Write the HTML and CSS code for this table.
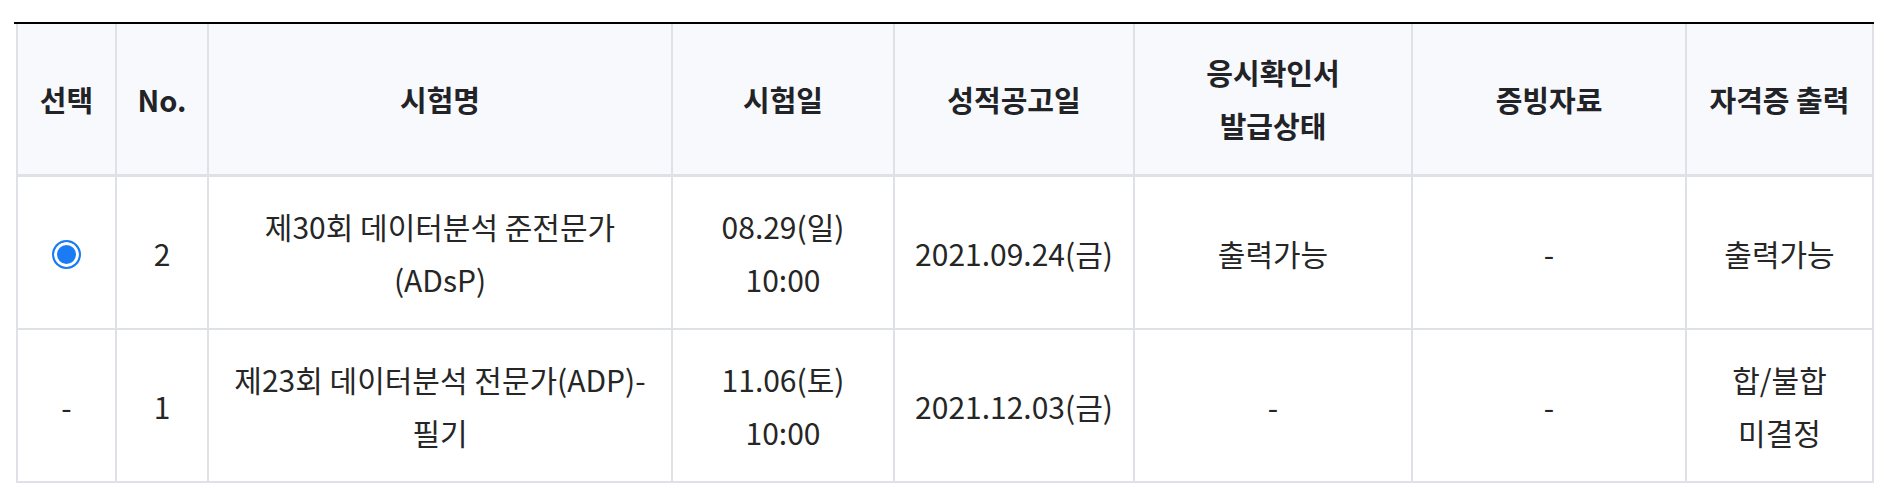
FILE: index.html
```html
<!DOCTYPE html>
<html lang="ko">
<head>
<meta charset="utf-8">
<title>시험 목록</title>
<link rel="stylesheet" href="styles.css">
</head>
<body>
<div class="table-wrap">
  <table class="exam-table">
    <colgroup>
      <col class="c-select">
      <col class="c-no">
      <col class="c-name">
      <col class="c-date">
      <col class="c-result">
      <col class="c-confirm">
      <col class="c-proof">
      <col class="c-cert">
    </colgroup>
    <thead>
      <tr>
        <th>선택</th>
        <th>No.</th>
        <th>시험명</th>
        <th>시험일</th>
        <th>성적공고일</th>
        <th>응시확인서<br>발급상태</th>
        <th>증빙자료</th>
        <th>자격증 출력</th>
      </tr>
    </thead>
    <tbody>
      <tr>
        <td><span class="radio is-checked" role="radio" aria-checked="true"></span></td>
        <td>2</td>
        <td>제30회 데이터분석 준전문가 (ADsP)</td>
        <td>08.29(일)<br>10:00</td>
        <td>2021.09.24(금)</td>
        <td>출력가능</td>
        <td>-</td>
        <td>출력가능</td>
      </tr>
      <tr>
        <td>-</td>
        <td>1</td>
        <td>제23회 데이터분석 전문가(ADP)-필기</td>
        <td>11.06(토)<br>10:00</td>
        <td>2021.12.03(금)</td>
        <td>-</td>
        <td>-</td>
        <td>합/불합<br>미결정</td>
      </tr>
    </tbody>
  </table>
</div>
</body>
</html>
```
FILE: styles.css
```css
html, body {
  margin: 0;
  padding: 0;
  background: #ffffff;
}

body {
  padding: 22px 14px;
  font-family: "Noto Sans CJK KR", "Noto Sans", sans-serif;
  color: #262626;
  font-variant-ligatures: none;
  font-feature-settings: "calt" 0, "liga" 0, "locl" 0;
}

.table-wrap {
  width: 1860px;
  border-top: 2px solid #000000;
  padding: 0 2px;
  box-sizing: border-box;
}

.exam-table {
  width: 1856px;
  border-collapse: collapse;
  table-layout: fixed;
  font-size: 30px;
  line-height: 53px;
  text-align: center;
  word-break: keep-all;
}

.c-select { width: 99px; }
.c-no { width: 92px; }
.c-name { width: 464px; }
.c-date { width: 222px; }
.c-result { width: 240px; }
.c-confirm { width: 278px; }
.c-proof { width: 274px; }
.c-cert { width: 187px; }

.exam-table th,
.exam-table td {
  border: 2px solid #dee1e6;
  padding: 22px 15px;
  vertical-align: middle;
}

.exam-table th {
  border-top: none;
  border-bottom: 3px solid #dee1e6;
  background: #f8f9fd;
  font-size: 29px;
  font-weight: 700;
  color: #212327;
}

.exam-table td {
  font-weight: 400;
  padding-top: 23px;
  padding-bottom: 22px;
}

.radio {
  display: inline-block;
  width: 29px;
  height: 29px;
  box-sizing: border-box;
  border: 2px solid #1a7bf5;
  border-radius: 50%;
  background: #ffffff;
  vertical-align: middle;
  position: relative;
  top: -3px;
}

.radio.is-checked {
  background: #1a7bf5;
  box-shadow: inset 0 0 0 3px #ffffff;
}
```
